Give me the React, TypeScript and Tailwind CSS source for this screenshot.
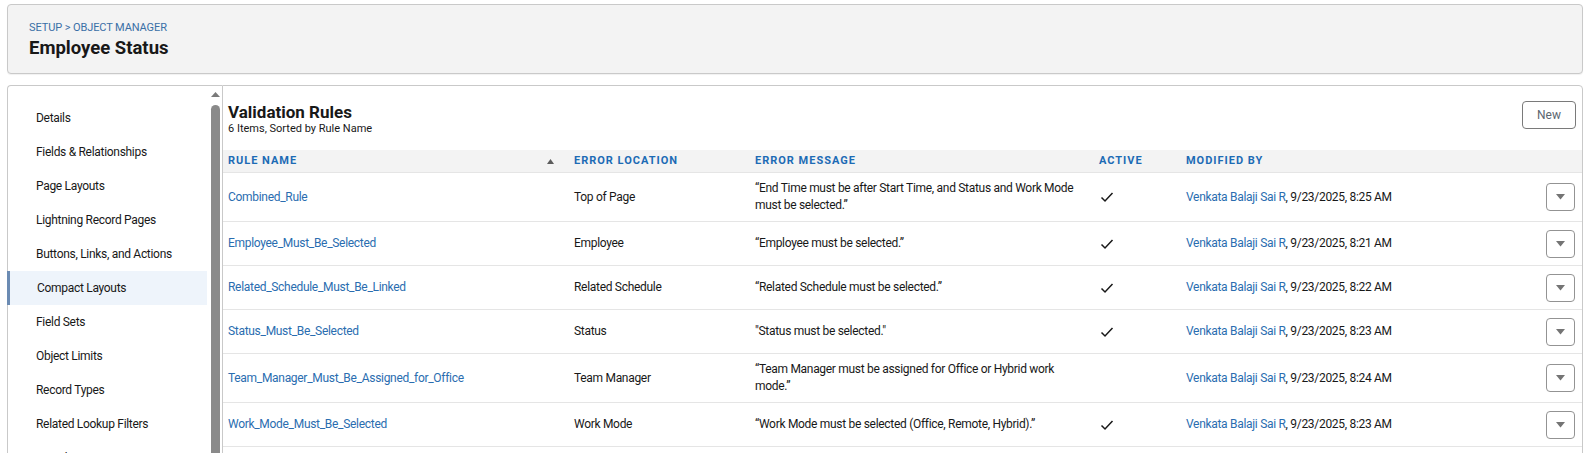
const FONT = "font-['Segoe_UI','Roboto','Noto_Sans',sans-serif]";

const NAV_ITEMS = [
  'Details',
  'Fields & Relationships',
  'Page Layouts',
  'Lightning Record Pages',
  'Buttons, Links, and Actions',
  'Compact Layouts',
  'Field Sets',
  'Object Limits',
  'Record Types',
  'Related Lookup Filters',
  'Search Layouts',
];

const RULES = [
  {
    name: 'Combined_Rule',
    location: 'Top of Page',
    message: '“End Time must be after Start Time, and Status and Work Mode must be selected.”',
    active: true,
    time: '9/23/2025, 8:25 AM',
  },
  {
    name: 'Employee_Must_Be_Selected',
    location: 'Employee',
    message: '“Employee must be selected.”',
    active: true,
    time: '9/23/2025, 8:21 AM',
  },
  {
    name: 'Related_Schedule_Must_Be_Linked',
    location: 'Related Schedule',
    message: '“Related Schedule must be selected.”',
    active: true,
    time: '9/23/2025, 8:22 AM',
  },
  {
    name: 'Status_Must_Be_Selected',
    location: 'Status',
    message: '"Status must be selected."',
    active: true,
    time: '9/23/2025, 8:23 AM',
  },
  {
    name: 'Team_Manager_Must_Be_Assigned_for_Office',
    location: 'Team Manager',
    message: '“Team Manager must be assigned for Office or Hybrid work mode.”',
    active: false,
    time: '9/23/2025, 8:24 AM',
  },
  {
    name: 'Work_Mode_Must_Be_Selected',
    location: 'Work Mode',
    message: '“Work Mode must be selected (Office, Remote, Hybrid).”',
    active: true,
    time: '9/23/2025, 8:23 AM',
  },
];

const COLS = 'grid grid-cols-[346px_181px_344px_87px_1fr_36px] pl-[5px]';

function Check() {
  return (
    <svg width="14" height="12" viewBox="0 0 14 12" fill="none">
      <path d="M1.5 6.5 L5 10 L12.5 2" stroke="#181818" strokeWidth="1.5" />
    </svg>
  );
}

function RowMenu() {
  return (
    <button className="w-[29px] h-[28px] border border-[#939393] rounded-[4px] bg-white flex items-center justify-center">
      <svg width="9" height="6" viewBox="0 0 9 6">
        <path d="M0 0 H9 L4.5 5.5 Z" fill="#747474" />
      </svg>
    </button>
  );
}

export default function App() {
  return (
    <div className={`${FONT} h-[453px] overflow-hidden bg-white px-[7px] pt-[4px] text-[#181818]`}>
      {/* page header */}
      <div className="h-[70px] border border-[#c9c9c9] rounded-[4px] bg-[#f3f3f3] pl-[21px] pt-[15px] shadow-[0_1px_1px_rgba(0,0,0,0.06)]">
        <div className="text-[11px] leading-[16px] tracking-[-0.1px] text-[#3a6fa6]">SETUP &gt; OBJECT MANAGER</div>
        <div className="mt-[1px] text-[18.5px] leading-[22px] font-bold">Employee Status</div>
      </div>

      <div className="mt-[11px] flex h-[400px]">
        {/* left nav */}
        <div className="w-[215px] shrink-0 flex border-l border-t border-[#c9c9c9] rounded-tl-[4px]">
          <ul className="w-[199px] pt-[15px]">
            {NAV_ITEMS.map((item) => {
              const selected = item === 'Compact Layouts';
              return (
                <li
                  key={item}
                  className={`h-[34px] flex items-center text-[12px] tracking-[-0.3px] ${
                    selected ? '-ml-px pl-[27px] border-l-[3px] border-[#6b8bb3] bg-[#eef4fb]' : 'pl-[28px]'
                  }`}
                >
                  {item}
                </li>
              );
            })}
          </ul>
          <div className="w-[15px] flex flex-col items-center pt-[6px] pl-[1px]">
            <svg width="9" height="5" viewBox="0 0 9 5">
              <path d="M0 5 H9 L4.5 0 Z" fill="#7a7a7a" />
            </svg>
            <div className="mt-[8px] w-[9px] flex-1 rounded-t-[5px] bg-[#8a8a8a]" />
          </div>
        </div>

        {/* main panel */}
        <div className="flex-1 border border-[#c9c9c9] rounded-tr-[4px]">
          <div className="flex justify-between pl-[5px] pr-[6px] pt-[15px] h-[64px]">
            <div>
              <div className="text-[17px] leading-[20px] font-bold mt-px">Validation Rules</div>
              <div className="text-[11px] leading-[14px]">6 Items, Sorted by Rule Name</div>
            </div>
            <button className="w-[54px] h-[28px] border border-[#7a7a7a] rounded-[4px] text-[12px] text-[#5c6670] bg-white">
              New
            </button>
          </div>

          {/* table header */}
          <div className={`${COLS} h-[23px] items-center bg-[#f3f3f3] border-b border-[#e5e5e5] text-[11px] font-bold tracking-[0.09em] text-[#1c6bb5]`}>
            <div className="flex items-center justify-between pr-[20px]">
              <span>RULE NAME</span>
              <svg width="7" height="5" viewBox="0 0 7 5">
                <path d="M0 5 H7 L3.5 0 Z" fill="#5c5c5c" />
              </svg>
            </div>
            <div>ERROR LOCATION</div>
            <div>ERROR MESSAGE</div>
            <div>ACTIVE</div>
            <div>MODIFIED BY</div>
            <div />
          </div>

          {RULES.map((r) => (
            <div
              key={r.name}
              className={`${COLS} min-h-[44px] py-[7px] items-center border-b border-[#e5e5e5] text-[12px] leading-[17px] tracking-[-0.3px]`}
            >
              <div className="text-[#2a6db0]">{r.name}</div>
              <div>{r.location}</div>
              <div className="pr-[8px]">{r.message}</div>
              <div className="pl-[1px]">{r.active && <Check />}</div>
              <div>
                <span className="text-[#2a6db0]">Venkata Balaji Sai R</span>, {r.time}
              </div>
              <div className="flex">
                <RowMenu />
              </div>
            </div>
          ))}
        </div>
      </div>
    </div>
  );
}
